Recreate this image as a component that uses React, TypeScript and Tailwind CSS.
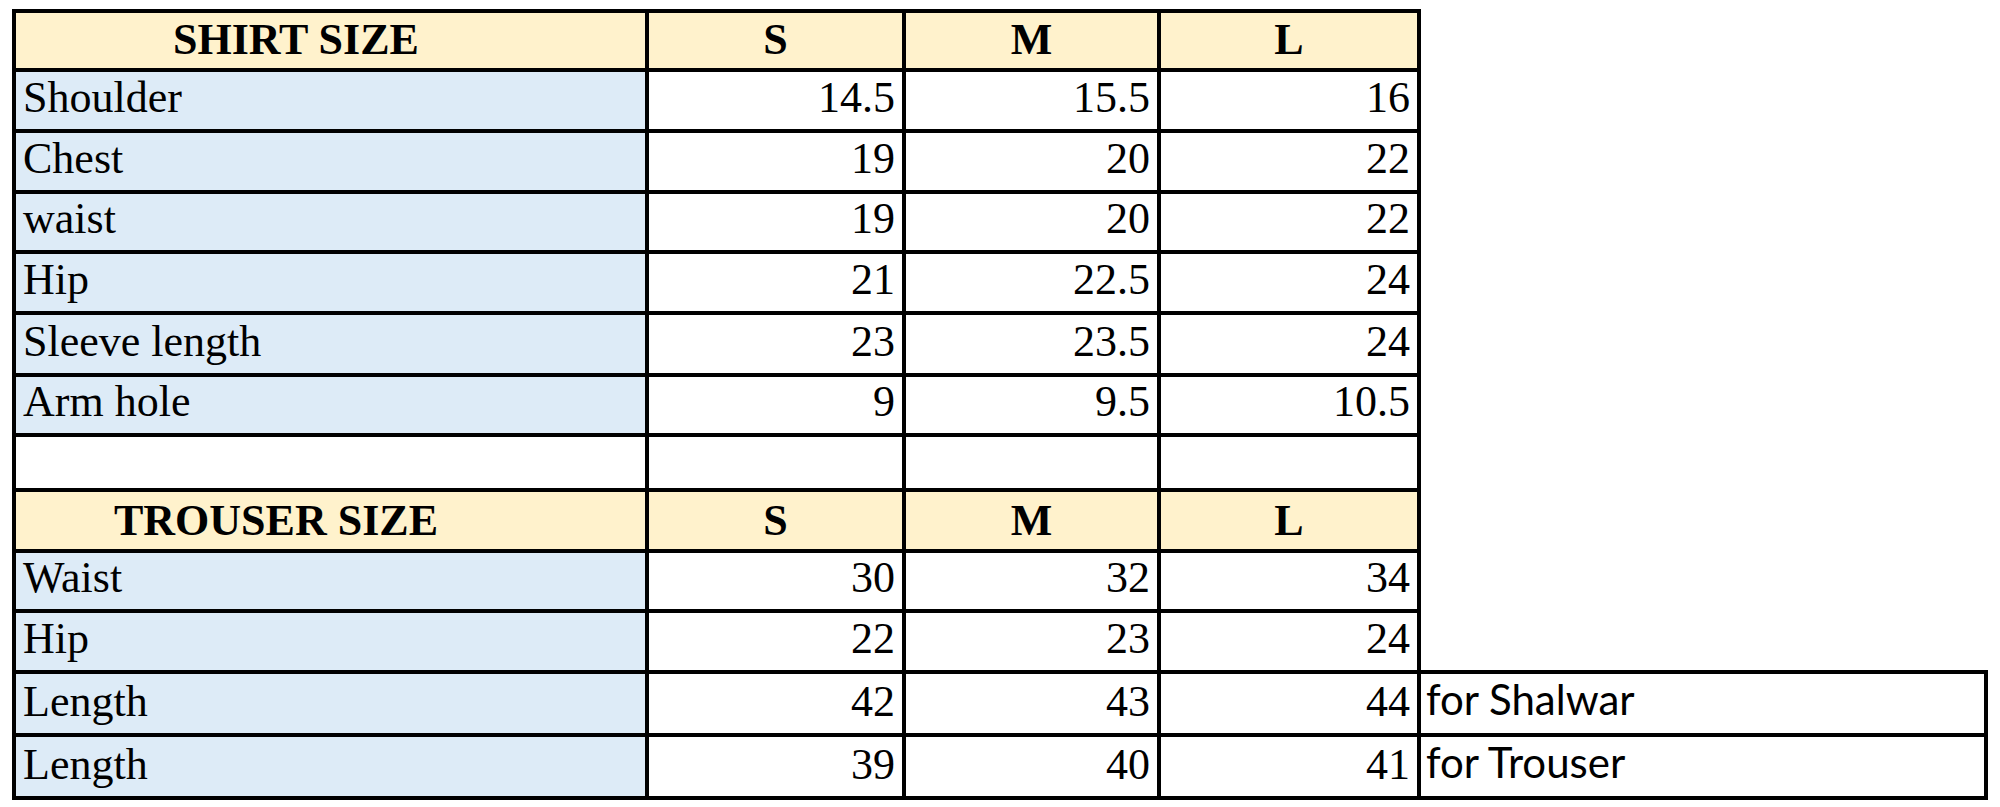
const serif = { fontFamily: '"Liberation Serif", "Times New Roman", serif' }

type Row = {
  label: string
  values: string[]
  height: string
  kind: 'head' | 'data' | 'blank'
  indent?: string
}

const rows: Row[] = [
  { label: 'SHIRT SIZE', values: ['S', 'M', 'L'], height: 'h-[55px]', kind: 'head', indent: 'pl-[157px]' },
  { label: 'Shoulder', values: ['14.5', '15.5', '16'], height: 'h-[57px]', kind: 'data' },
  { label: 'Chest', values: ['19', '20', '22'], height: 'h-[57px]', kind: 'data' },
  { label: 'waist', values: ['19', '20', '22'], height: 'h-[56px]', kind: 'data' },
  { label: 'Hip', values: ['21', '22.5', '24'], height: 'h-[57px]', kind: 'data' },
  { label: 'Sleeve length', values: ['23', '23.5', '24'], height: 'h-[58px]', kind: 'data' },
  { label: 'Arm hole', values: ['9', '9.5', '10.5'], height: 'h-[56px]', kind: 'data' },
  { label: '', values: ['', '', ''], height: 'h-[51px]', kind: 'blank' },
  { label: 'TROUSER SIZE', values: ['S', 'M', 'L'], height: 'h-[57px]', kind: 'head', indent: 'pl-[98px]' },
  { label: 'Waist', values: ['30', '32', '34'], height: 'h-[56px]', kind: 'data' },
  { label: 'Hip', values: ['22', '23', '24'], height: 'h-[57px]', kind: 'data' },
  { label: 'Length', values: ['42', '43', '44'], height: 'h-[59px]', kind: 'data' },
  { label: 'Length', values: ['39', '40', '41'], height: 'h-[59px]', kind: 'data' },
]

function LabelCell({ row }: { row: Row }) {
  if (row.kind === 'head') {
    return (
      <div className={`${row.height} flex items-end bg-[#fff2cc] pb-[6px] font-bold ${row.indent}`}>
        {row.label}
      </div>
    )
  }
  if (row.kind === 'blank') return <div className={`${row.height} bg-white`} />
  return <div className={`${row.height} flex items-end bg-[#ddebf7] pb-[9px] pl-[7px]`}>{row.label}</div>
}

function ValueCell({ row, value }: { row: Row; value: string }) {
  if (row.kind === 'head') {
    return (
      <div className={`${row.height} flex items-end justify-center bg-[#fff2cc] pb-[6px] font-bold`}>
        {value}
      </div>
    )
  }
  return (
    <div className={`${row.height} flex items-end justify-end bg-white pb-[9px] pr-[7px]`}>{value}</div>
  )
}

export default function App() {
  return (
    <div className="min-h-[807px] bg-white pl-[12px] pt-[9px] text-black">
      <div className="flex items-end">
        <div
          className="grid grid-cols-[629px_253px_251px_256px] gap-[4px] bg-black p-[4px] text-[44px] leading-none"
          style={serif}
        >
          {rows.map((row, i) => (
            <div key={i} className="contents">
              <LabelCell row={row} />
              {row.values.map((v, j) => (
                <ValueCell key={j} row={row} value={v} />
              ))}
            </div>
          ))}
        </div>

        {/* notes next to the last two rows */}
        <div
          className="flex w-[567px] flex-col border-y-4 border-r-4 border-black font-['Lato',sans-serif] text-[42px] leading-none"
        >
          <div className="flex h-[59px] items-end pb-[13px] pl-[5px]">for Shalwar</div>
          <div className="h-[4px] bg-black" />
          <div className="flex h-[59px] items-end pb-[13px] pl-[5px]">for Trouser</div>
        </div>
      </div>
    </div>
  )
}
